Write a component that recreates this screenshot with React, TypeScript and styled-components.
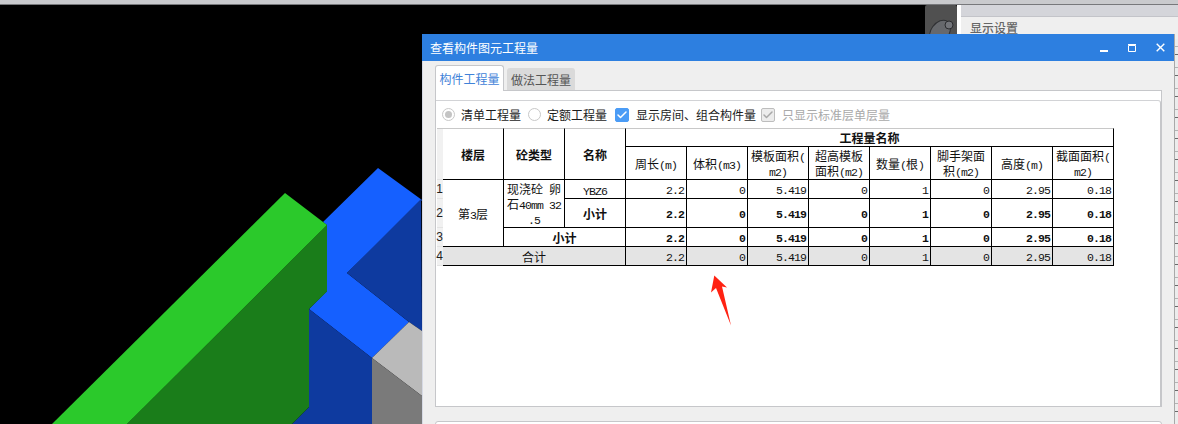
import React from "react"
import styled, { createGlobalStyle } from "styled-components"
import { Check } from "lucide-react"

const values = ["2.2", "0", "5.419", "0", "1", "0", "2.95", "0.18"]

const App = () => {
  return (
    <Root>
      <GlobalStyle />
      <TopStrip />
      <Workspace>
        <Viewport>
          <Scene />
          <Gizmo>
            <svg width="32" height="29" viewBox="925 5 32 29">
              <ellipse cx="940" cy="32" rx="9" ry="13" fill="#66686c" stroke="#2f3033" transform="rotate(35 940 32)" />
              <circle cx="949" cy="25" r="4" fill="#73757a" stroke="#2a2b2e" />
            </svg>
          </Gizmo>
        </Viewport>
        <Divider />
        <SettingsPanel>
          <SettingsStrip />
          <SettingsTitle>显示设置</SettingsTitle>
          <SettingsList />
        </SettingsPanel>
      </Workspace>

      <Window>
        <TitleBar>
          <TitleText>查看构件图元工程量</TitleText>
          <WinButton>
            <svg width="8" height="8" viewBox="0 0 8 8"><rect x="0" y="6" width="8" height="2" fill="#fff" /></svg>
          </WinButton>
          <WinButton>
            <svg width="8" height="8" viewBox="0 0 8 8"><path d="M.5 1.5h7v6h-7zM0 .5h8" fill="none" stroke="#fff" /></svg>
          </WinButton>
          <WinButton>
            <svg width="9" height="9" viewBox="0 0 9 9"><path d="M.7.7l7.6 7.6M8.3.7L.7 8.3" fill="none" stroke="#fff" strokeWidth="1.4" /></svg>
          </WinButton>
        </TitleBar>

        <WinBody>
          <TabBar>
            <Tab $active>构件工程量</Tab>
            <Tab>做法工程量</Tab>
          </TabBar>
          <Pane>
            <Group>
              <Options>
                <Option>
                  <Radio $checked />
                  清单工程量
                </Option>
                <Option>
                  <Radio />
                  定额工程量
                </Option>
                <Option>
                  <CheckBox><Check size={12} strokeWidth={3} color="#fff" /></CheckBox>
                  显示房间、组合构件量
                </Option>
                <Option $disabled>
                  <CheckBox $disabled><Check size={12} strokeWidth={3} color="#a8a8a8" /></CheckBox>
                  只显示标准层单层量
                </Option>
              </Options>
              <Grid>
                <colgroup>
                  <col style={{ width: 6 }} />
                  {Array.from({ length: 11 }).map((_, i) => <col key={i} style={{ width: 61 }} />)}
                </colgroup>
                <thead>
                  <tr>
                    <RowHead rowSpan={2} $first />
                    <HeadCell rowSpan={2} $first $bold>楼层</HeadCell>
                    <HeadCell rowSpan={2} $first $bold>砼类型</HeadCell>
                    <HeadCell rowSpan={2} $first $bold>名称</HeadCell>
                    <HeadCell colSpan={8} $first $bold $h={19}>工程量名称</HeadCell>
                  </tr>
                  <tr>
                    <HeadCell $h={33}>周长<Mono>(m)</Mono></HeadCell>
                    <HeadCell>体积<Mono>(m3)</Mono></HeadCell>
                    <HeadCell>模板面积<Mono>(</Mono><br /><Mono>m2)</Mono></HeadCell>
                    <HeadCell>超高模板<br />面积<Mono>(m2)</Mono></HeadCell>
                    <HeadCell>数量<Mono>(</Mono>根<Mono>)</Mono></HeadCell>
                    <HeadCell>脚手架面<br />积<Mono>(m2)</Mono></HeadCell>
                    <HeadCell>高度<Mono>(m)</Mono></HeadCell>
                    <HeadCell>截面面积<Mono>(</Mono><br /><Mono>m2)</Mono></HeadCell>
                  </tr>
                </thead>
                <tbody>
                  <tr>
                    <RowHead>1</RowHead>
                    <TextCell rowSpan={3}>第<Mono>3</Mono>层</TextCell>
                    <TextCell rowSpan={2}>
                      现浇砼<Mono> </Mono>卵<br />
                      石<Mono>40mm 32</Mono><br />
                      <Mono>.5</Mono>
                    </TextCell>
                    <TextCell $h={19}><Mono>YBZ6</Mono></TextCell>
                    {values.map((v, i) => <NumCell key={i}><Mono>{v}</Mono></NumCell>)}
                  </tr>
                  <tr>
                    <RowHead>2</RowHead>
                    <TextCell $bold $h={29}>小计</TextCell>
                    {values.map((v, i) => <NumCell key={i}><Mono $bold>{v}</Mono></NumCell>)}
                  </tr>
                  <tr>
                    <RowHead>3</RowHead>
                    <TextCell colSpan={2} $bold $h={19}>小计</TextCell>
                    {values.map((v, i) => <NumCell key={i}><Mono $bold>{v}</Mono></NumCell>)}
                  </tr>
                  <tr>
                    <RowHead>4</RowHead>
                    <TextCell colSpan={3} $shade $h={19}>合计</TextCell>
                    {values.map((v, i) => <NumCell key={i} $shade><Mono>{v}</Mono></NumCell>)}
                  </tr>
                </tbody>
              </Grid>
            </Group>
          </Pane>
          <LowerBox />
        </WinBody>
      </Window>

      <Annotation width="30" height="60" viewBox="705 270 30 60">
        <polygon points="714.3,275.5 727,287.5 722,286.5 731,325.5 716,288 711,292.5" fill="#ff2212" />
      </Annotation>
    </Root>
  )
}

// the 3d model behind the window
const Scene = () => (
  <SceneSvg viewBox="0 5 957 419">
    <polygon points="378,168 422,200 347,273 409,322 372,358 309,309 327,291 327,225 323,222" fill="#1560ff" />
    <polygon points="421,199 347,273 409,322 422,331" fill="#0e3a9f" />
    <polygon points="309,309 372,358 372,424 292,424 309,407" fill="#0e3a9f" />
    <polygon points="409,322 372,358 422,396 422,331" fill="#bababa" />
    <polygon points="372,358 422,396 422,424 372,424" fill="#7a7a7a" />
    <polygon points="327,225 327,291.5 309,309 309,407 292,424 127,424" fill="#1a7d1a" />
    <polygon points="285,193 327,225 127,424 52,424" fill="#2bc92b" />
  </SceneSvg>
)

const GlobalStyle = createGlobalStyle`
  html, body {
    margin: 0;
    padding: 0;
    background: #000;
  }
  * {
    box-sizing: border-box;
  }
`

const Root = styled.div`
  position: relative;
  width: 1178px;
  height: 424px;
  overflow: hidden;
  display: flex;
  flex-direction: column;
  font-family: "Noto Sans CJK SC", "Liberation Sans", sans-serif;
  font-size: 12px;
`

const TopStrip = styled.div`
  height: 5px;
  background: #c9cacd;
  border-bottom: 1px solid #77787b;
`

const Workspace = styled.div`
  flex: 1;
  min-height: 0;
  display: flex;
`

const Viewport = styled.div`
  position: relative;
  width: 957px;
  background: #000;
`

const SceneSvg = styled.svg`
  display: block;
  width: 957px;
  height: 419px;
`

const Gizmo = styled.div`
  position: absolute;
  top: 0;
  right: 0;
  width: 32px;
  height: 29px;
  background: #505050;
  border-radius: 2px 2px 0 0;
  overflow: hidden;

  svg {
    display: block;
  }
`

const Divider = styled.div`
  width: 4px;
  background: #fff;
`

const SettingsPanel = styled.div`
  flex: 1;
  display: flex;
  flex-direction: column;
  background: #efefef;
`

const SettingsStrip = styled.div`
  height: 12px;
  background: #d4d5da;
  border-bottom: 1px solid #c3c4c9;
`

const SettingsTitle = styled.div`
  height: 22px;
  padding: 3px 0 0 9px;
  line-height: 16px;
  color: #666;
  font-weight: 500;
`

const SettingsList = styled.div`
  flex: 1;
  background: repeating-linear-gradient(
    to bottom,
    #ececec 0 7px,
    #b4b4b4 7px 8px,
    #ececec 8px 15px,
    #6a6a6a 15px 16px,
    #ececec 16px 21px
  );
`

const Window = styled.div`
  position: absolute;
  left: 422px;
  top: 34px;
  width: 752px;
  height: 390px;
  display: flex;
  flex-direction: column;
  overflow: hidden;
  background: #efefef;
  box-shadow: 1px 0 0 #a9a9a9;
`

const TitleBar = styled.div`
  height: 27px;
  flex: none;
  display: flex;
  align-items: center;
  padding-left: 8px;
  background: #2d7fe0;
`

const TitleText = styled.div`
  flex: 1;
  color: #fff;
  line-height: 27px;
`

const WinButton = styled.div`
  width: 28px;
  height: 27px;
  display: flex;
  align-items: center;
  justify-content: center;
`

const WinBody = styled.div`
  flex: 1;
  min-height: 0;
  padding: 4px 12px 0 12px;
  border-left: 1px solid #d6d9e4;
`

const TabBar = styled.div`
  height: 25px;
  display: flex;
  align-items: flex-end;
  gap: 3px;
`

const Tab = styled.div<{ $active?: boolean }>`
  position: relative;
  z-index: 1;
  text-align: center;
  width: ${(p) => (p.$active ? 69 : 68)}px;
  height: ${(p) => (p.$active ? 26 : 22)}px;
  margin-bottom: ${(p) => (p.$active ? -1 : 0)}px;
  line-height: ${(p) => (p.$active ? 25 : 23)}px;
  border-radius: 3px 3px 0 0;
  color: ${(p) => (p.$active ? "#3f82d8" : "#555")};
  background: ${(p) => (p.$active ? "#fff" : "#dadada")};
  border: ${(p) => (p.$active ? "1px solid #c6c7ca" : "none")};
  border-bottom: none;
`

const Pane = styled.div`
  height: 317px;
  display: flex;
  flex-direction: column;
  padding-top: 9px;
  background: #fff;
  border: 1px solid #c6c7ca;
`

const Group = styled.div`
  flex: 1;
  border-top: 1px solid #d2d3d6;
  border-right: 1px solid #c6c7ca;
  border-top-right-radius: 3px;
`

const Options = styled.div`
  height: 27px;
  display: flex;
  align-items: center;
  gap: 7px;
  padding-left: 6px;
`

const Option = styled.div<{ $disabled?: boolean }>`
  display: flex;
  align-items: center;
  gap: 6px;
  line-height: 16px;
  color: ${(p) => (p.$disabled ? "#a9a9a9" : "#1c1c1c")};
`

const Radio = styled.span<{ $checked?: boolean }>`
  width: 13px;
  height: 13px;
  border-radius: 50%;
  border: 1px solid #c8c8c8;
  background: #fff;
  display: flex;
  align-items: center;
  justify-content: center;

  &::after {
    content: "";
    width: 7px;
    height: 7px;
    border-radius: 50%;
    background: ${(p) => (p.$checked ? "#c4c4c4" : "transparent")};
  }
`

const CheckBox = styled.span<{ $disabled?: boolean }>`
  width: 14px;
  height: 14px;
  margin-left: ${(p) => (p.$disabled ? -2 : 1)}px;
  margin-right: 1px;
  border-radius: 2px;
  display: flex;
  align-items: center;
  justify-content: center;
  background: ${(p) => (p.$disabled ? "#ececec" : "#4b9cf6")};
  border: 1px solid ${(p) => (p.$disabled ? "#bdbdbd" : "#4b9cf6")};
`

const Grid = styled.table`
  margin-left: 1px;
  width: 677px;
  table-layout: fixed;
  border-collapse: separate;
  border-spacing: 0;
  color: #111;
`

const Cell = `
  padding: 0;
  border-right: 1px solid #000;
  border-bottom: 1px solid #000;
  white-space: nowrap;
`

const RowHead = styled.th<{ $first?: boolean }>`
  padding: 0;
  font-family: "Liberation Sans", sans-serif;
  font-size: 12px;
  font-weight: 400;
  line-height: 12px;
  color: #1f1f1f;
  background: #f1f1f1;
  border-bottom: 1px solid #e3e3e3;
  border-top: ${(p) => (p.$first ? "1px solid #c8c8c8" : "none")};
  text-indent: -1px;
`

const HeadCell = styled.th<{ $first?: boolean; $bold?: boolean; $h?: number }>`
  ${Cell}
  text-align: center;
  line-height: 15px;
  font-weight: ${(p) => (p.$bold ? 700 : 400)};
  border-top: ${(p) => (p.$first ? "1px solid #c8c8c8" : "none")};
  height: ${(p) => (p.$h ? `${p.$h}px` : "auto")};
`

const TextCell = styled.td<{ $bold?: boolean; $shade?: boolean; $h?: number }>`
  ${Cell}
  text-align: center;
  line-height: 15px;
  font-weight: ${(p) => (p.$bold ? 700 : 400)};
  background: ${(p) => (p.$shade ? "#e4e4e4" : "transparent")};
  height: ${(p) => (p.$h ? `${p.$h}px` : "auto")};
`

const NumCell = styled.td<{ $shade?: boolean }>`
  ${Cell}
  text-align: right;
  padding-right: 2px;
  line-height: 14px;
  background: ${(p) => (p.$shade ? "#e4e4e4" : "transparent")};
`

const Mono = styled.span<{ $bold?: boolean }>`
  font-family: "Liberation Mono", monospace;
  font-size: 11.5px;
  line-height: 0;
  letter-spacing: -0.9px;
  font-weight: ${(p) => (p.$bold ? 700 : 400)};
  white-space: pre;
`

const LowerBox = styled.div`
  height: 40px;
  margin-top: 14px;
  background: #fff;
  border: 1px solid #c6c7ca;
  border-radius: 3px 3px 0 0;
`

const Annotation = styled.svg`
  position: absolute;
  left: 705px;
  top: 270px;
`

export default App
